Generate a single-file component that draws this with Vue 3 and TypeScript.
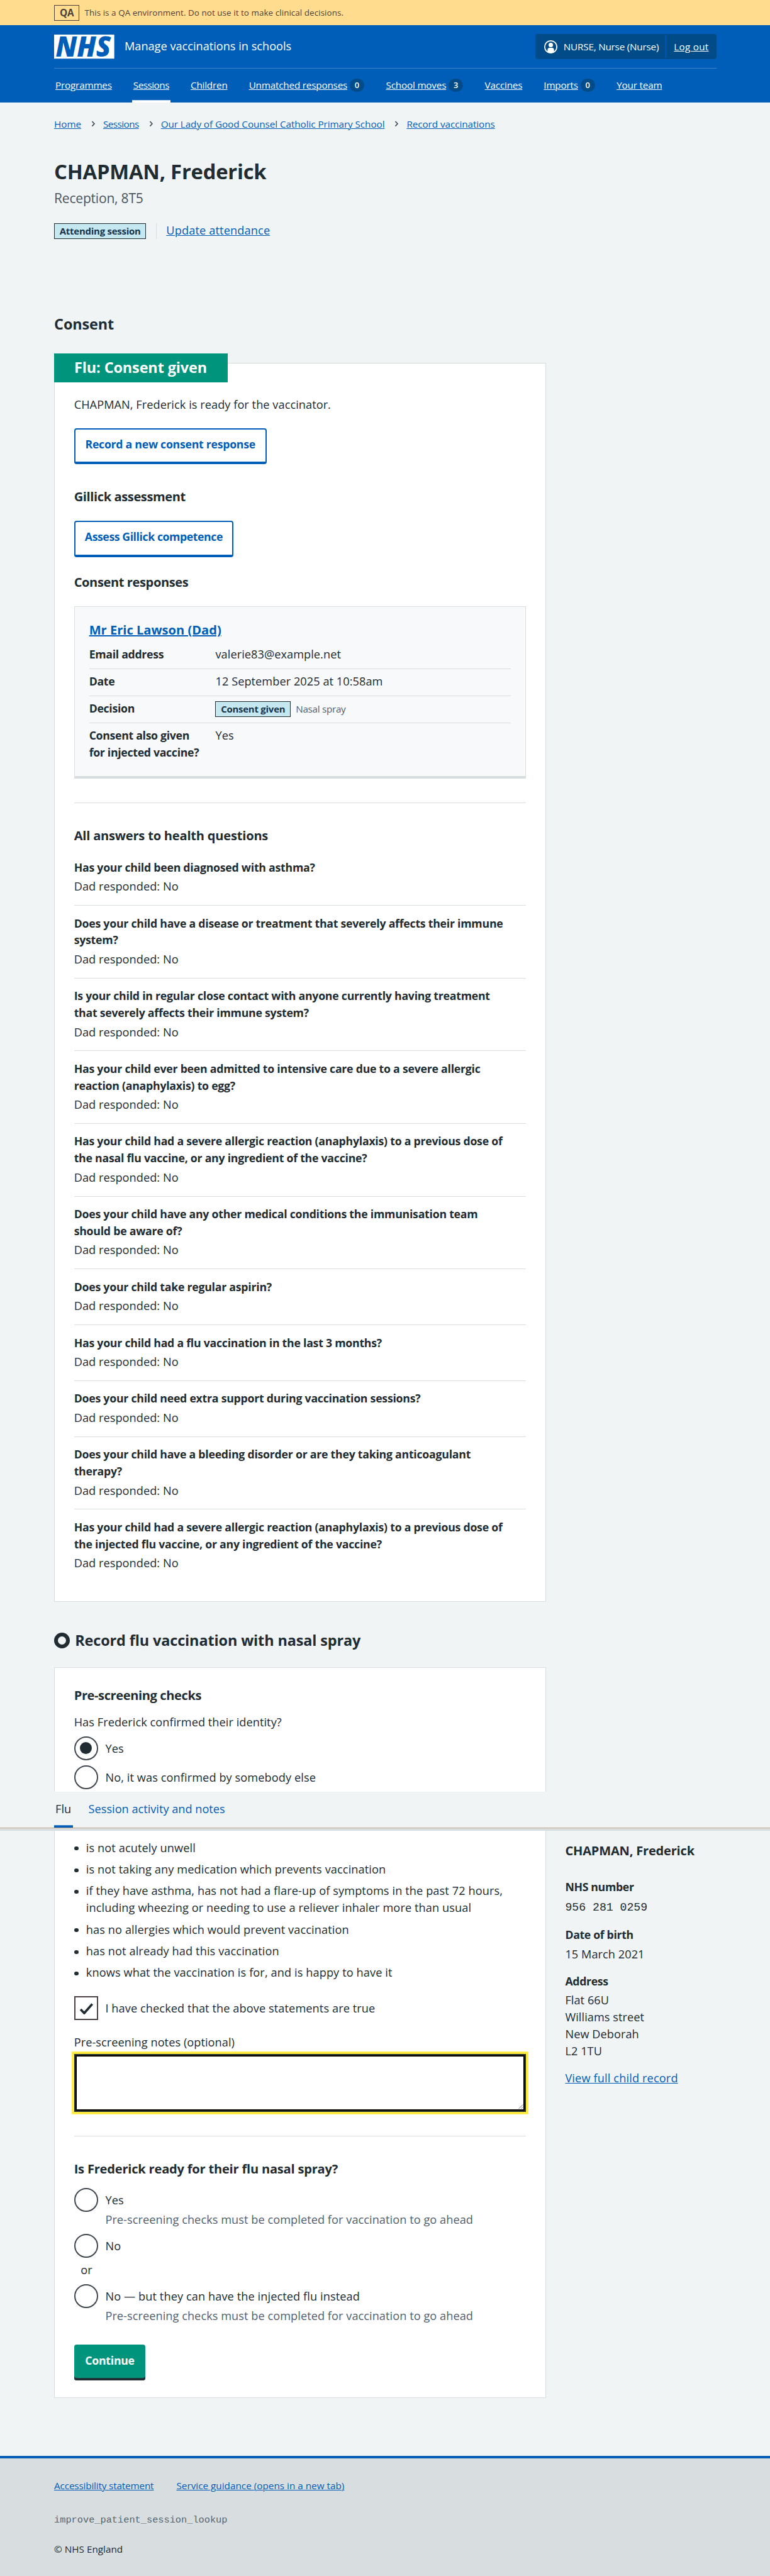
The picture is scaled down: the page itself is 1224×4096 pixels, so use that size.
<script setup lang="ts">
interface NavItem {
  label: string
  count?: number
  current?: boolean
}

const nav: NavItem[] = [
  { label: 'Programmes' },
  { label: 'Sessions', current: true },
  { label: 'Children' },
  { label: 'Unmatched responses', count: 0 },
  { label: 'School moves', count: 3 },
  { label: 'Vaccines' },
  { label: 'Imports', count: 0 },
  { label: 'Your team' },
]

const breadcrumbs: string[] = [
  'Home',
  'Sessions',
  'Our Lady of Good Counsel Catholic Primary School',
  'Record vaccinations',
]

const healthQuestions: string[][] = [
  ['Has your child been diagnosed with asthma?'],
  ['Does your child have a disease or treatment that severely affects their immune', 'system?'],
  ['Is your child in regular close contact with anyone currently having treatment', 'that severely affects their immune system?'],
  ['Has your child ever been admitted to intensive care due to a severe allergic', 'reaction (anaphylaxis) to egg?'],
  ['Has your child had a severe allergic reaction (anaphylaxis) to a previous dose of', 'the nasal flu vaccine, or any ingredient of the vaccine?'],
  ['Does your child have any other medical conditions the immunisation team', 'should be aware of?'],
  ['Does your child take regular aspirin?'],
  ['Has your child had a flu vaccination in the last 3 months?'],
  ['Does your child need extra support during vaccination sessions?'],
  ['Does your child have a bleeding disorder or are they taking anticoagulant', 'therapy?'],
  ['Has your child had a severe allergic reaction (anaphylaxis) to a previous dose of', 'the injected flu vaccine, or any ingredient of the vaccine?'],
]

const statements: string[][] = [
  ['is not acutely unwell'],
  ['is not taking any medication which prevents vaccination'],
  ['if they have asthma, has not had a flare-up of symptoms in the past 72 hours,', 'including wheezing or needing to use a reliever inhaler more than usual'],
  ['has no allergies which would prevent vaccination'],
  ['has not already had this vaccination'],
  ['knows what the vaccination is for, and is happy to have it'],
]

const address: string[] = ['Flat 66U', 'Williams street', 'New Deborah', 'L2 1TU']
</script>

<template>
  <div class="page">
    <div class="banner">
      <strong class="banner-tag">QA</strong>
      <span>This is a QA environment. Do not use it to make clinical decisions.</span>
    </div>

    <header class="header">
      <div class="header-top">
        <svg class="logo" viewBox="0 0 100 40" role="img" aria-label="NHS">
          <rect width="100" height="40" fill="#fff" />
          <text x="2.5" y="36.4" textLength="92" lengthAdjust="spacingAndGlyphs">NHS</text>
        </svg>
        <span class="service">Manage vaccinations in schools</span>
        <div class="account">
          <span class="account-user">
            <svg class="account-icon" viewBox="0 0 22 22" aria-hidden="true">
              <circle cx="11" cy="11" r="10.1" fill="none" stroke="#fff" stroke-width="1.8" />
              <circle cx="11" cy="7.9" r="3.7" fill="#fff" />
              <path d="M5.6 19.4V16a3.6 3.6 0 0 1 3.6-3.5h3.6a3.6 3.6 0 0 1 3.6 3.5v3.4A10 10 0 0 1 11 21a10 10 0 0 1-5.4-1.6z" fill="#fff" />
            </svg>
            NURSE, Nurse (Nurse)
          </span>
          <span class="account-out"><a>Log out</a></span>
        </div>
      </div>
      <nav class="nav">
        <span v-for="item in nav" :key="item.label" class="nav-item" :class="{ current: item.current }">
          <a>{{ item.label }}</a>
          <span v-if="item.count !== undefined" class="count">{{ item.count }}</span>
        </span>
      </nav>
    </header>

    <main class="main">
      <div class="breadcrumbs">
        <template v-for="(crumb, i) in breadcrumbs" :key="crumb">
          <svg v-if="i > 0" class="chevron" viewBox="0 0 7 10" aria-hidden="true">
            <path d="M1.5 1l3.7 4-3.7 4" fill="none" stroke="#3f4a54" stroke-width="1.7" />
          </svg>
          <a :class="{ tight: crumb === 'Sessions' }">{{ crumb }}</a>
        </template>
      </div>

      <h1>CHAPMAN, Frederick</h1>
      <p class="caption">Reception, 8T5</p>
      <div class="attendance">
        <strong class="tag">Attending session</strong>
        <span class="attendance-link"><a>Update attendance</a></span>
      </div>

      <h2 class="consent-title">Consent</h2>

      <section class="card">
        <h2 class="card-label">Flu: Consent given</h2>
        <p class="ready">CHAPMAN, Frederick is ready for the vaccinator.</p>
        <button class="button">Record a new consent response</button>
        <h3 class="gillick">Gillick assessment</h3>
        <button class="button assess">Assess Gillick competence</button>
        <h3 class="responses">Consent responses</h3>

        <div class="response">
          <h3 class="response-title"><a>Mr Eric Lawson (Dad)</a></h3>
          <dl class="summary">
            <div class="row"><dt>Email address</dt><dd>valerie83@example.net</dd></div>
            <div class="row"><dt>Date</dt><dd>12 September 2025 at 10:58am</dd></div>
            <div class="row">
              <dt>Decision</dt>
              <dd class="decision"><strong class="tag">Consent given</strong><span>Nasal spray</span></dd>
            </div>
            <div class="row last"><dt>Consent also given<br />for injected vaccine?</dt><dd>Yes</dd></div>
          </dl>
        </div>

        <hr />
        <h3 class="answers-title">All answers to health questions</h3>
        <dl class="answers">
          <div v-for="(lines, i) in healthQuestions" :key="i" class="answer">
            <dt><span v-for="line in lines" :key="line">{{ line }}</span></dt>
            <dd>Dad responded: No</dd>
          </div>
        </dl>
      </section>

      <div class="columns">
        <div class="column">
          <h2 class="record-title"><i class="ring"></i>Record flu vaccination with nasal spray</h2>

          <section class="card form">
            <h3 class="checks">Pre-screening checks</h3>
            <p class="identity">Has Frederick confirmed their identity?</p>
            <div class="choice"><i class="radio on"></i><span>Yes</span></div>
            <div class="choice second"><i class="radio"></i><span>No, it was confirmed by somebody else</span></div>

            <div class="tabs">
              <span class="tab current">Flu</span>
              <span class="tab">Session activity and notes</span>
            </div>

            <ul class="statements">
              <li v-for="(lines, i) in statements" :key="i">
                <span v-for="line in lines" :key="line">{{ line }}</span>
              </li>
            </ul>

            <div class="choice confirm">
              <i class="checkbox">
                <svg viewBox="0 0 22 19" aria-hidden="true">
                  <path d="M1.2 10.4l6 6.4L20.6 1.6" fill="none" stroke="#212b32" stroke-width="3.8" />
                </svg>
              </i>
              <span>I have checked that the above statements are true</span>
            </div>

            <label class="notes-label">Pre-screening notes (optional)</label>
            <div class="notes">
              <svg viewBox="0 0 8 8" aria-hidden="true"><path d="M0.5 7.5l7-7M4.5 7.5l3-3" stroke="#666" stroke-width="1" /></svg>
            </div>

            <hr />
            <h3 class="question">Is Frederick ready for their flu nasal spray?</h3>
            <div class="choice"><i class="radio"></i><span>Yes</span></div>
            <p class="hint">Pre-screening checks must be completed for vaccination to go ahead</p>
            <div class="choice"><i class="radio"></i><span>No</span></div>
            <p class="or">or</p>
            <div class="choice"><i class="radio"></i><span>No — but they can have the injected flu instead</span></div>
            <p class="hint">Pre-screening checks must be completed for vaccination to go ahead</p>
            <button class="button primary">Continue</button>
          </section>
        </div>

        <aside class="aside">
          <h3>CHAPMAN, Frederick</h3>
          <dl>
            <dt class="first">NHS number</dt>
            <dd class="mono">956 281 0259</dd>
            <dt>Date of birth</dt>
            <dd>15 March 2021</dd>
            <dt>Address</dt>
            <dd><span v-for="line in address" :key="line">{{ line }}</span></dd>
          </dl>
          <a class="full-record">View full child record</a>
        </aside>
      </div>
    </main>

    <footer class="footer">
      <div class="footer-links">
        <a class="accessibility">Accessibility statement</a>
        <a>Service guidance (opens in a new tab)</a>
      </div>
      <p class="build">improve_patient_session_lookup</p>
      <p class="copyright">© NHS England</p>
    </footer>
  </div>
</template>

<style>
html,
body {
  margin: 0;
  background: #f0f4f5;
}
</style>

<style scoped>
.page {
  zoom: 0.9565;
  display: flex;
  flex-direction: column;
  width: 100%;
  height: 4282.3px;
  overflow: hidden;
  background: #f0f4f5;
  color: #212b32;
  font: 440 19px/28px "Open Sans", "Noto Sans", sans-serif;
  letter-spacing: 0.06px;
}

h1, h2, h3, p, dl, dd, ul {
  margin: 0;
  padding: 0;
}

* {
  box-sizing: border-box;
  flex-shrink: 0;
}

h1, h2, h3, dt, strong {
  font-weight: 660;
}

h2 {
  font-size: 24.5px;
  line-height: 32px;
  letter-spacing: -0.12px;
}

h3 {
  font-size: 21px;
  line-height: 30px;
  letter-spacing: -0.22px;
}

dt {
  font-size: 18.5px;
}

a {
  color: #005eb8;
  text-decoration: underline;
  text-decoration-thickness: 1px;
  text-underline-offset: 1.5px;
}

i {
  display: block;
}

hr {
  width: 100%;
  height: 1.05px;
  margin: 40px 0 0;
  border: 0;
  background: #d8dde0;
}

/* environment banner */
.banner {
  display: flex;
  align-items: center;
  gap: 8.6px;
  height: 42px;
  padding-left: 90px;
  background: #ffdc8e;
  color: #4d3f3c;
  font-size: 14px;
  letter-spacing: 0.08px;
}

.banner-tag {
  width: 42px;
  height: 26px;
  border: 1.05px solid #4d3f3c;
  font-size: 16px;
  line-height: 24px;
  letter-spacing: -0.2px;
  text-align: center;
}

/* header */
.header {
  padding: 0 89px 0 90px;
  background: #005eb8;
  color: #fff;
  font-size: 16px;
}

.header a {
  color: #fff;
}

.header-top {
  display: flex;
  align-items: center;
  height: 72px;
  border-bottom: 1.05px solid #3f84c6;
}

.logo {
  width: 100px;
  height: 40px;
  overflow: visible;
}

.logo text {
  fill: #005eb8;
  font: italic 800 46.5px "Open Sans", sans-serif;
}

.service {
  margin-left: 17px;
  padding-bottom: 1px;
  font-size: 19px;
  letter-spacing: 0;
}

.account {
  display: flex;
  align-items: center;
  height: 42px;
  margin-left: auto;
  border-radius: 4px;
  background: #004b88;
  letter-spacing: -0.24px;
}

.account-user {
  display: flex;
  align-items: center;
  width: 217px;
  height: 40px;
  padding-left: 14.4px;
  border-right: 1.05px solid #005eb8;
}

.account-icon {
  width: 22px;
  height: 22px;
  margin-right: 10.5px;
}

.account-out {
  width: 84px;
  padding-left: 13.4px;
  letter-spacing: 0.25px;
}

.nav {
  display: flex;
  gap: 31.6px;
  height: 56px;
  line-height: 56px;
  letter-spacing: -0.22px;
}

.nav-item {
  display: flex;
  align-items: center;
  height: 56px;
  padding: 0 2px;
}

.nav-item.current {
  box-shadow: inset 0 -4px #fff;
  letter-spacing: -0.55px;
}

.count {
  width: 24px;
  height: 22px;
  margin: 0 0.6px 0 4px;
  border-radius: 12px;
  background: #004b88;
  font-size: 13.5px;
  font-weight: 600;
  line-height: 22px;
  text-align: center;
}

/* page title */
.main {
  display: flex;
  flex-direction: column;
  align-items: flex-start;
  padding: 24px 0 0 90px;
}

.breadcrumbs {
  display: flex;
  align-items: center;
  height: 24px;
  font-size: 16px;
  letter-spacing: -0.09px;
}

.breadcrumbs .tight {
  letter-spacing: -0.6px;
}

.chevron {
  width: 7px;
  height: 10px;
  margin: 0 13px 0 16.6px;
}

h1 {
  margin-top: 45.4px;
  font-size: 34.2px;
  line-height: 44px;
  letter-spacing: -0.2px;
}

.caption {
  margin-top: 5.8px;
  color: #4a5560;
  font-size: 22px;
  line-height: 32px;
  letter-spacing: -0.22px;
}

.attendance {
  display: flex;
  height: 26px;
  margin-top: 25.8px;
}

.tag {
  height: 26px;
  padding: 0 8px;
  border: 1.05px solid #212b32;
  background: #c5e7f0;
  color: #15334b;
  font-size: 15.6px;
  line-height: 24px;
  letter-spacing: -0.22px;
}

.attendance-link {
  margin-left: 16px;
  padding-left: 16.4px;
  border-left: 1.05px solid #d8dde0;
  line-height: 23px;
  letter-spacing: 0.15px;
}

.consent-title {
  margin-top: 125.6px;
}

/* cards */
.card {
  display: flex;
  flex-direction: column;
  align-items: flex-start;
  width: 817px;
  margin-top: 48.4px;
  padding: 0 32px 49.4px;
  border: 1.05px solid #d8dde0;
  background: #fff;
}

.card-label {
  width: 288px;
  margin: -16px 0 0 -33px;
  padding-left: 33.4px;
  background: #00947d;
  color: #fff;
  line-height: 48px;
}

.ready {
  margin-top: 22.6px;
}

.button {
  display: block;
  width: 320px;
  height: 60px;
  margin-top: 25.4px;
  padding: 0 0 4.6px;
  border: 2.1px solid #005eb8;
  border-bottom-width: 4.2px;
  border-radius: 4px;
  background: #fff;
  color: #005eb8;
  font: 660 18.5px/28px "Open Sans", "Noto Sans", sans-serif;
  letter-spacing: -0.28px;
  text-align: center;
  white-space: nowrap;
}

.button.assess {
  width: 265px;
  margin-top: 25px;
  letter-spacing: -0.45px;
}

.gillick {
  margin-top: 39px;
}

.responses {
  margin-top: 27.7px;
}

.gillick,
.responses,
.checks {
  letter-spacing: -0.42px;
}

.response {
  width: 751px;
  height: 286px;
  margin-top: 24.3px;
  padding: 23.9px 24px 0;
  border: 1.05px solid #d8dde0;
  border-bottom-width: 4.2px;
  background: #f8f9fb;
}

.response-title {
  letter-spacing: 0;
}

.response-title a {
  text-decoration-thickness: 2px;
}

.summary {
  margin-top: 4.1px;
}

.row {
  display: grid;
  grid-template-columns: 210px 1fr;
  height: 45px;
  padding-top: 6.8px;
  border-bottom: 1.05px solid #d8dde0;
}

.row dt {
  letter-spacing: -0.32px;
}

.row.last {
  height: auto;
  border: 0;
}

.decision {
  display: flex;
  gap: 8.6px;
  height: 28px;
  padding-top: 2.2px;
  color: #4f6070;
  font-size: 16px;
  line-height: 26px;
  letter-spacing: -0.33px;
}

.answers-title {
  margin-top: 40px;
}

.answers {
  width: 100%;
  margin-top: 8px;
}

.answer {
  padding: 15.05px 0 16.8px;
  border-bottom: 1.05px solid #d8dde0;
}

.answer:last-child {
  border: 0;
  padding-bottom: 0;
}

.answer dt {
  letter-spacing: -0.25px;
}

.answer dt span,
.statements span,
.aside dd span {
  display: block;
  white-space: nowrap;
}

.answer dd {
  margin-top: 4px;
}

/* vaccination form */
.columns {
  display: flex;
  gap: 32px;
}

.record-title {
  display: flex;
  align-items: center;
  gap: 8.6px;
  margin-top: 47.8px;
}

.ring {
  width: 26px;
  height: 26px;
  border: 6.3px solid #212b32;
  border-radius: 50%;
}

.card.form {
  margin-top: 28.4px;
  padding-bottom: 28px;
}

.checks {
  margin-top: 31.7px;
}

.identity {
  margin: 14.9px 0 9.4px;
}

.choice {
  display: flex;
  gap: 12px;
  height: 40px;
  line-height: 41.4px;
  letter-spacing: 0.1px;
}

.choice.second {
  margin-top: 8px;
}

.radio {
  display: flex;
  align-items: center;
  justify-content: center;
  width: 40px;
  height: 40px;
  border: 2.1px solid #3f464e;
  border-radius: 50%;
}

.radio.on::after {
  width: 20px;
  height: 20px;
  border-radius: 50%;
  background: #212b32;
  content: "";
}

.checkbox {
  width: 40px;
  height: 40px;
  padding: 9px 0 0 8px;
  border: 2.1px solid #4a3f42;
  line-height: 0;
}

.checkbox svg {
  width: 22px;
  height: 19px;
}

.tabs {
  position: relative;
  display: flex;
  gap: 24px;
  width: 1290px;
  height: 65px;
  margin: 4px 0 0 -123px;
  padding-left: 90px;
  border-bottom: 4.2px solid #d8dde0;
  background: #f0f4f5;
  box-shadow: inset 0 -1.05px #c2a68d;
  line-height: 58.2px;
}

.tab {
  height: 60px;
  padding: 0 2px;
  color: #005eb8;
  letter-spacing: 0;
}

.tab.current {
  width: 31px;
  box-shadow: inset 0 -4px #005eb8;
  color: #212b32;
}

.statements {
  display: flex;
  flex-direction: column;
  gap: 8px;
  margin-top: 14.4px;
  letter-spacing: 0.11px;
  list-style: none;
}

.statements li {
  position: relative;
  padding-left: 20px;
}

.statements li::before {
  position: absolute;
  top: 12.2px;
  left: 0.8px;
  width: 6.4px;
  height: 6.4px;
  border-radius: 50%;
  background: #212b32;
  content: "";
}

.confirm {
  margin-top: 24.9px;
}

.notes-label {
  margin-top: 22.6px;
}

.notes {
  display: flex;
  align-items: flex-end;
  justify-content: flex-end;
  width: 751px;
  height: 96px;
  margin-top: 5.4px;
  border: 2.1px solid #212b32;
  background: #fff;
  box-shadow: inset 0 0 0 2.1px #000, 0 0 0 4px #ffeb3b;
}

.notes svg {
  width: 8px;
  height: 8px;
  margin: 0 2.5px 2.5px 0;
}

.question {
  margin: 39.7px 0 16.3px;
}

.hint {
  margin: -1.7px 0 9.7px;
  padding-left: 52px;
  color: #4f6070;
}

.or {
  margin: 6.6px 0 9.4px;
  padding-left: 11px;
}

.button.primary {
  width: 119px;
  margin-top: 24px;
  padding: 0 0 6.8px;
  border: 0;
  background: #00947d;
  box-shadow: inset 0 -4px #212b32;
  color: #fff;
}

/* patient details */
.aside {
  display: flex;
  flex-direction: column;
  align-items: flex-start;
  width: 260px;
  padding: 399.3px 0 0 0.3px;
}

.aside dt {
  margin-top: 16.9px;
  letter-spacing: -0.35px;
}

.aside dt.first {
  margin-top: 30.6px;
}

.aside dd {
  margin-top: 3.9px;
}

.aside dd.mono {
  margin-top: 6.8px;
  font-family: "Liberation Mono", monospace;
  font-weight: 400;
  letter-spacing: 0;
}

.full-record {
  margin-top: 17px;
  letter-spacing: 0.15px;
}

/* footer */
.footer {
  flex: 1 0 auto;
  margin-top: 96px;
  padding: 33.8px 0 0 90px;
  border-top: 4.2px solid #005eb8;
  background: #d8dde0;
  font-size: 16px;
  line-height: 24px;
  letter-spacing: 0;
}

.footer-links {
  display: flex;
  gap: 37.7px;
}

.accessibility {
  letter-spacing: -0.18px;
}

.build {
  margin-top: 33.9px;
  color: #56656f;
  font-family: "Liberation Mono", monospace;
  font-weight: 400;
}

.copyright {
  margin-top: 24.1px;
}
</style>
